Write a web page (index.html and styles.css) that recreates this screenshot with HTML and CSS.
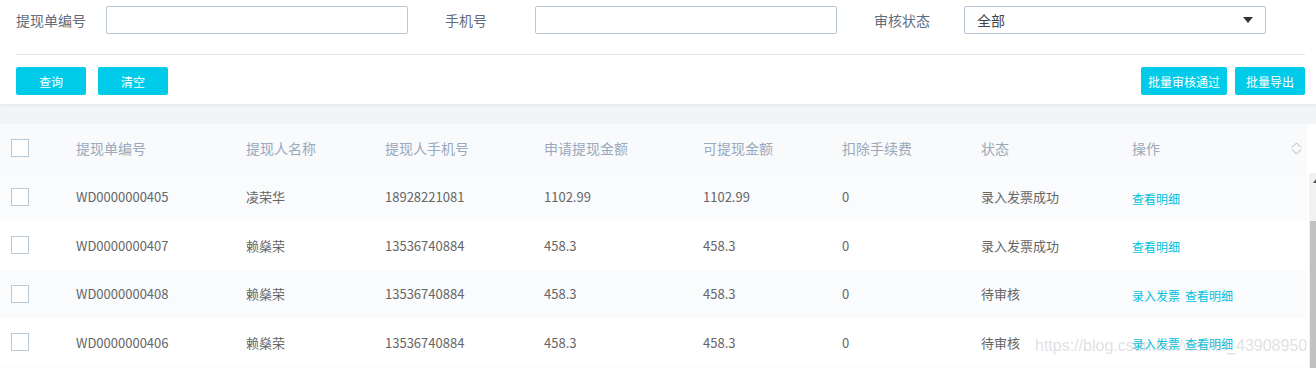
FILE: index.html
```html
<!DOCTYPE html>
<html lang="zh-CN">
<head>
  <meta charset="UTF-8" />
  <title>提现审核</title>
  <link rel="stylesheet" href="styles.css">
</head>
<body>
  <div class="filter">
    <div class="fields">
      <div class="field">
        <label>提现单编号</label>
        <input type="text" class="text" />
      </div>
      <div class="field">
        <label>手机号</label>
        <input type="text" class="text" />
      </div>
      <div class="field">
        <label>审核状态</label>
        <div class="select">全部<span class="caret"></span></div>
      </div>
    </div>
    <div class="actions">
      <div class="group">
        <button class="btn">查询</button>
        <button class="btn">清空</button>
      </div>
      <div class="group right">
        <button class="btn wide">批量审核通过</button>
        <button class="btn">批量导出</button>
      </div>
    </div>
  </div>
  <div class="band"></div>

  <div class="table">
    <div class="thead">
      <div class="tr">
        <span class="cb"></span>
        <span>提现单编号</span>
        <span>提现人名称</span>
        <span>提现人手机号</span>
        <span>申请提现金额</span>
        <span>可提现金额</span>
        <span>扣除手续费</span>
        <span>状态</span>
        <span class="last">操作
          <svg class="sort" width="11" height="13" viewBox="0 0 11 13">
            <polyline points="1,5.5 5.5,1 10,5.5" />
            <polyline points="1,7.5 5.5,12 10,7.5" />
          </svg>
        </span>
      </div>
      <div class="gutter"></div>
    </div>
    <div class="tbody">
      <div class="rows">
        <div class="tr">
          <span class="cb"></span>
          <span>WD0000000405</span>
          <span>凌荣华</span>
          <span>18928221081</span>
          <span>1102.99</span>
          <span>1102.99</span>
          <span>0</span>
          <span>录入发票成功</span>
          <span class="ops"><a>查看明细</a></span>
        </div>
        <div class="tr">
          <span class="cb"></span>
          <span>WD0000000407</span>
          <span>赖燊荣</span>
          <span>13536740884</span>
          <span>458.3</span>
          <span>458.3</span>
          <span>0</span>
          <span>录入发票成功</span>
          <span class="ops"><a>查看明细</a></span>
        </div>
        <div class="tr">
          <span class="cb"></span>
          <span>WD0000000408</span>
          <span>赖燊荣</span>
          <span>13536740884</span>
          <span>458.3</span>
          <span>458.3</span>
          <span>0</span>
          <span>待审核</span>
          <span class="ops"><a>录入发票</a><a>查看明细</a></span>
        </div>
        <div class="tr">
          <span class="cb"></span>
          <span>WD0000000406</span>
          <span>赖燊荣</span>
          <span>13536740884</span>
          <span>458.3</span>
          <span>458.3</span>
          <span>0</span>
          <span>待审核</span>
          <span class="ops"><a>录入发票</a><a>查看明细</a></span>
        </div>
        <div class="tr filler"></div>
      </div>
      <div class="vscroll">
        <div class="arrow"></div>
        <div class="thumb"></div>
      </div>
    </div>
  </div>

  <div class="watermark">https://blog.csdn.net/weixin_43908950</div>
</body>
</html>
```

FILE: styles.css
```css
body {
  margin: 0;
  height: 368px;
  overflow: hidden;
  font-family: "Noto Sans CJK SC", sans-serif;
  font-size: 13px;
  color: #666;
  background: #fff;
  position: relative;
}
.filter {
  padding: 6px 11px 9px 16px;
  background: #fff;
  box-shadow: 0 1px 4px rgba(0,0,0,0.07);
  position: relative;
}
.fields {
  display: flex;
  gap: 37px;
}
.field {
  display: flex;
  align-items: center;
}
.field label {
  width: 90px;
  font-size: 14px;
  line-height: 28px;
  color: #5f6d7c;
}
.text, .select {
  width: 302px;
  height: 28px;
  box-sizing: border-box;
  border: 1px solid #b9c6d3;
  border-radius: 2px;
  margin: 0;
  background: #fff;
}
.select {
  display: flex;
  align-items: center;
  justify-content: space-between;
  padding: 0 12px;
  font-size: 14px;
  color: #444;
  margin-top: -1px;
}
.caret {
  border-left: 5px solid transparent;
  border-right: 5px solid transparent;
  border-top: 6px solid #333;
}
.actions {
  margin-top: 20px;
  border-top: 1px solid #e3e6ea;
  padding-top: 12px;
  display: flex;
  justify-content: space-between;
}
.group {
  display: flex;
  gap: 12px;
}
.group.right { gap: 8px; }
.btn {
  width: 70px;
  height: 28px;
  padding: 0;
  border: 0;
  border-radius: 2px;
  background: #00cbe8;
  color: #fff;
  font-family: inherit;
  font-size: 12px;
}
.btn.wide { width: 86px; }
.band {
  height: 20px;
  background: #f3f4f6;
}
.thead, .tbody {
  display: flex;
}
.thead .tr, .rows { flex: 1; }
.gutter, .vscroll {
  width: 7px;
  margin-left: 2px;
}
.tr {
  display: grid;
  grid-template-columns: 65px 170px 139px 159px 159px 139px 139px 151px 1fr;
  align-items: center;
  height: 48.5px;
  padding-left: 11px;
  white-space: nowrap;
}
.thead .tr {
  background: #f8fafc;
  color: #9aa9bb;
  font-size: 14px;
}
.rows .tr:nth-child(odd) { background: #f9fbfd; }
.cb {
  width: 18px;
  height: 18px;
  box-sizing: border-box;
  border: 1px solid #b8c9d8;
  background: #fff;
}
.last {
  display: flex;
  align-items: center;
  justify-content: space-between;
  padding-right: 5px;
}
.sort {
  fill: none;
  stroke: #b3b3b3;
  stroke-width: 1;
}
.ops {
  display: flex;
  gap: 5px;
}
.ops a {
  font-size: 12px;
  color: #00c1de;
  margin-top: 3px;
}
.vscroll {
  background: #f1f1f1;
  position: relative;
}
.arrow {
  margin: 6px 0 0 4px;
  width: 0;
  border-left: 3px solid transparent;
  border-right: 3px solid transparent;
  border-bottom: 4px solid #505050;
}
.thumb {
  margin: 38px 0 0 1px;
  height: 200px;
  background: #c1c1c1;
}
.watermark {
  position: absolute;
  left: 1035px;
  top: 337px;
  font-family: "Liberation Sans", sans-serif;
  font-size: 16px;
  color: rgba(175,175,175,0.4);
  pointer-events: none;
}
```
